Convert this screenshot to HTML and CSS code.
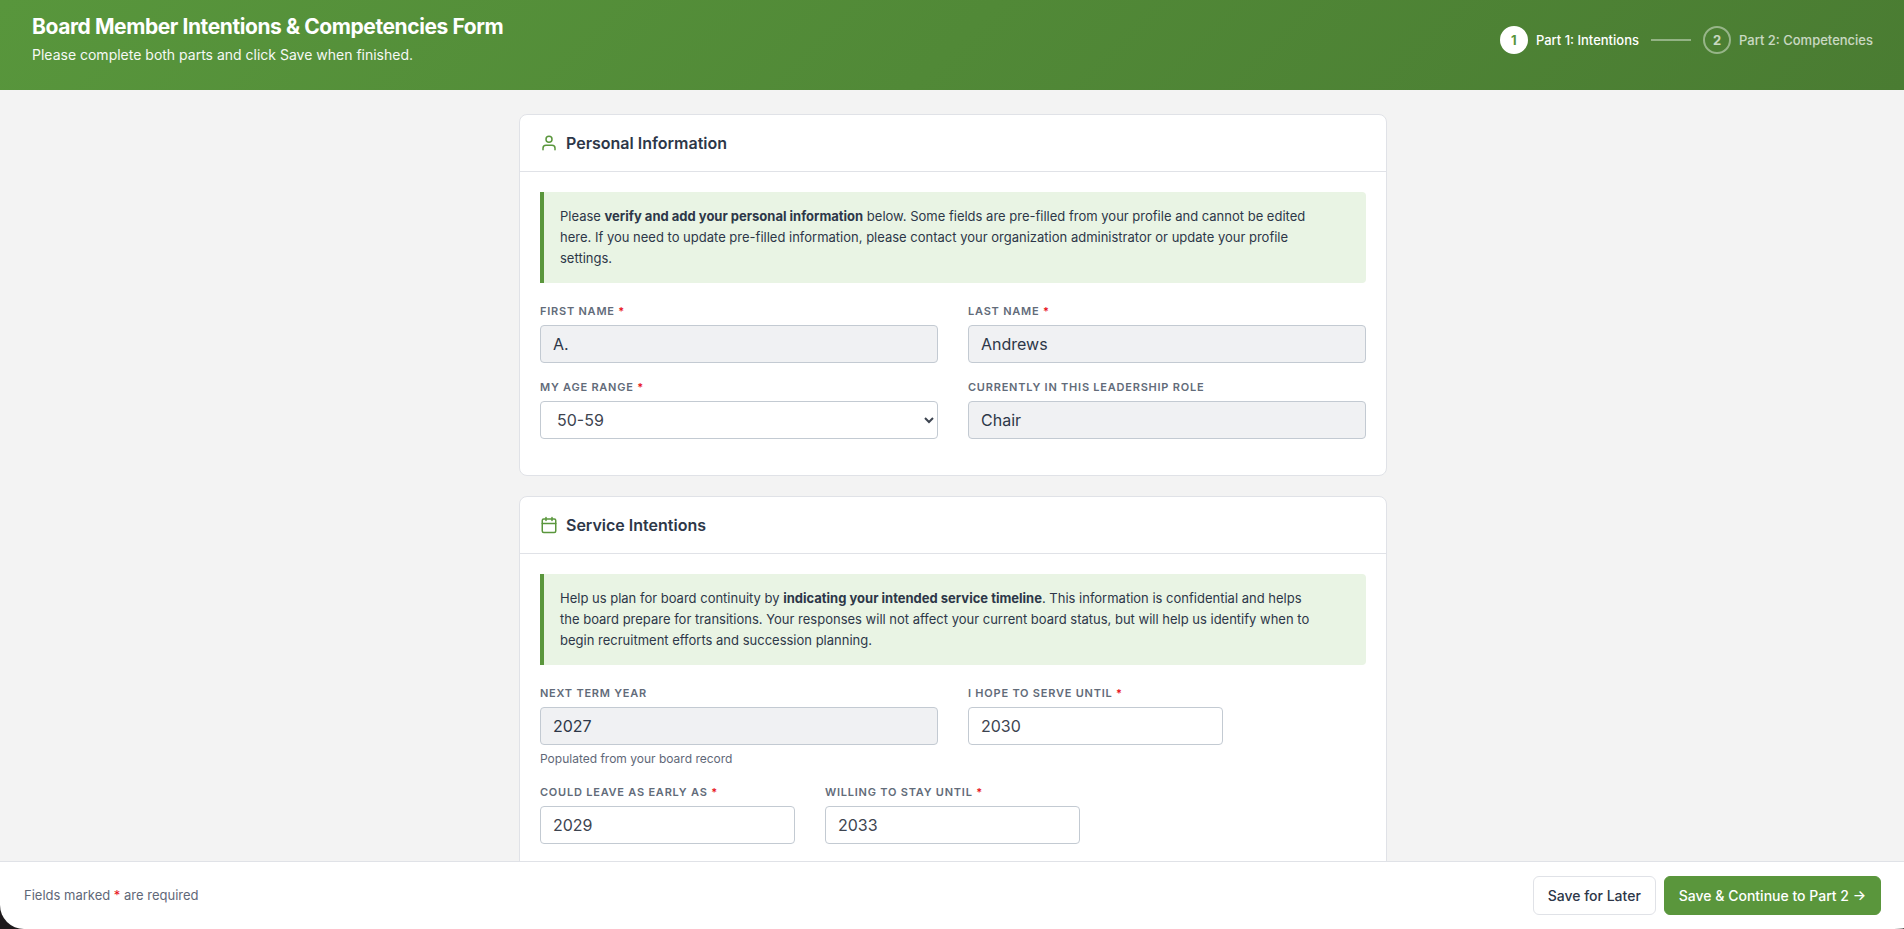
FILE: index.html
```html
<!DOCTYPE html>
<html lang="en">
<head>
    <meta charset="UTF-8">
    <meta name="viewport" content="width=device-width, initial-scale=1.0">
    <title>Board Member Intentions &amp; Competencies Form</title>
    <link rel="stylesheet" href="styles.css">
</head>
<body>
    <form class="page">
        <header class="page-header">
            <div class="header-text">
                <h1>Board Member Intentions &amp; Competencies Form</h1>
                <p>Please complete both parts and click Save when finished.</p>
            </div>
            <div class="steps">
                <div class="step active">
                    <span class="step-number">1</span>
                    <span>Part 1: Intentions</span>
                </div>
                <div class="step-line"></div>
                <div class="step">
                    <span class="step-number">2</span>
                    <span>Part 2: Competencies</span>
                </div>
            </div>
        </header>

        <main class="content">
            <section class="card">
                <div class="card-header">
                    <svg class="icon" viewBox="0 0 24 24"><path d="M20 21v-2a4 4 0 0 0-4-4H8a4 4 0 0 0-4 4v2"/><circle cx="12" cy="7" r="4"/></svg>
                    <h2>Personal Information</h2>
                </div>
                <div class="card-body">
                    <p class="notice">
                        Please <strong>verify and add your personal information</strong> below. Some fields are pre-filled from your profile and cannot be edited<br>
                        here. If you need to update pre-filled information, please contact your organization administrator or update your profile<br>
                        settings.
                    </p>
                    <div class="row">
                        <div class="field">
                            <label for="firstName">First Name <span class="required">*</span></label>
                            <input type="text" id="firstName" value="A." readonly>
                        </div>
                        <div class="field">
                            <label for="lastName">Last Name <span class="required">*</span></label>
                            <input type="text" id="lastName" value="Andrews" readonly>
                        </div>
                    </div>
                    <div class="row">
                        <div class="field">
                            <label for="ageRange">My Age Range <span class="required">*</span></label>
                            <select id="ageRange">
                                <option>50-59</option>
                            </select>
                        </div>
                        <div class="field">
                            <label for="role">Currently in this Leadership Role</label>
                            <input type="text" id="role" value="Chair" readonly>
                        </div>
                    </div>
                </div>
            </section>

            <section class="card">
                <div class="card-header">
                    <svg class="icon" viewBox="0 0 24 24"><rect x="3" y="4" width="18" height="18" rx="2"/><path d="M16 2v4M8 2v4M3 10h18"/></svg>
                    <h2>Service Intentions</h2>
                </div>
                <div class="card-body">
                    <p class="notice">
                        Help us plan for board continuity by <strong>indicating your intended service timeline</strong>. This information is confidential and helps<br>
                        the board prepare for transitions. Your responses will not affect your current board status, but will help us identify when to<br>
                        begin recruitment efforts and succession planning.
                    </p>
                    <div class="row">
                        <div class="field">
                            <label for="nextTerm">Next Term Year</label>
                            <input type="text" id="nextTerm" value="2027" readonly>
                            <small>Populated from your board record</small>
                        </div>
                        <div class="field">
                            <label for="serveUntil">I Hope to Serve Until <span class="required">*</span></label>
                            <input type="text" id="serveUntil" class="year" value="2030">
                        </div>
                    </div>
                    <div class="row compact">
                        <div class="field">
                            <label for="leaveEarly">Could Leave as Early as <span class="required">*</span></label>
                            <input type="text" id="leaveEarly" class="year" value="2029">
                        </div>
                        <div class="field">
                            <label for="stayUntil">Willing to Stay Until <span class="required">*</span></label>
                            <input type="text" id="stayUntil" class="year" value="2033">
                        </div>
                    </div>
                </div>
            </section>
        </main>

        <footer class="action-bar">
            <p>Fields marked <span class="required">*</span> are required</p>
            <div class="actions">
                <button type="button" class="btn">Save for Later</button>
                <button type="button" class="btn btn-primary">Save &amp; Continue to Part 2 →</button>
            </div>
        </footer>
    </form>
</body>
</html>
```
FILE: styles.css
```css
* {
    box-sizing: border-box;
}
body {
    margin: 0;
    font-family: Inter, "Liberation Sans", sans-serif;
    font-size: 14px;
    line-height: 21px;
    color: #2d3748;
    background-color: #1e1a1c;
}
h1, h2, p {
    margin: 0;
}
.page {
    display: flex;
    flex-direction: column;
    height: 100vh;
}
.page-header {
    display: flex;
    justify-content: space-between;
    align-items: center;
    padding: 10px 31px 20px 32px;
    background: linear-gradient(135deg, #58963c, #4a7c32);
    color: white;
}
.header-text {
    padding-bottom: 5px;
}
h1 {
    font-size: 21px;
    line-height: 33px;
    font-weight: 700;
    letter-spacing: -0.02em;
}
.header-text p {
    margin-top: 1px;
    opacity: 0.95;
}
.steps {
    display: flex;
    align-items: center;
    gap: 12px;
}
.step {
    display: flex;
    align-items: center;
    gap: 8px;
    font-size: 13px;
    font-weight: 500;
    opacity: 0.7;
}
.step.active {
    opacity: 1;
}
.step-number {
    display: flex;
    align-items: center;
    justify-content: center;
    width: 28px;
    height: 28px;
    border: 2px solid rgba(255,255,255,0.6);
    border-radius: 50%;
    font-weight: 700;
}
.step.active .step-number {
    background-color: white;
    border-color: white;
    color: #5a963c;
}
.step-line {
    width: 40px;
    height: 2px;
    background-color: rgba(255,255,255,0.4);
}
.content {
    flex: 1;
    display: flex;
    flex-direction: column;
    align-items: center;
    gap: 20px;
    padding: 24px 24px 24px 26px;
    overflow-y: auto;
    scrollbar-width: none;
    background-color: #f3f3f3;
}
.card {
    flex-shrink: 0;
    width: 100%;
    max-width: 868px;
    background-color: white;
    border: 1px solid #e0e2e7;
    border-radius: 8px;
}
.card-header {
    display: flex;
    align-items: center;
    gap: 8px;
    padding: 16px 20px;
    border-bottom: 1px solid #e0e2e7;
}
.icon {
    width: 18px;
    height: 18px;
    fill: none;
    stroke: #5a963c;
    stroke-width: 2;
    stroke-linecap: round;
    stroke-linejoin: round;
}
h2 {
    font-size: 16px;
    line-height: 24px;
    font-weight: 600;
}
.card-body {
    padding: 20px;
}
.notice {
    margin-bottom: 20px;
    padding: 14px 16px;
    border-left: 4px solid #5a963c;
    border-radius: 0 4px 4px 0;
    background-color: #e9f4e4;
    font-size: 13px;
}
.row {
    display: grid;
    grid-template-columns: 1fr 1fr;
    gap: 30px;
    margin-bottom: 16px;
}
.row.compact {
    display: flex;
}
.field {
    display: flex;
    flex-direction: column;
}
label {
    margin-bottom: 6px;
    font-size: 11px;
    line-height: 16px;
    font-weight: 600;
    letter-spacing: 0.07em;
    text-transform: uppercase;
    color: #626b79;
}
.required {
    color: #e8141c;
}
input, select {
    width: 100%;
    height: 38px;
    padding: 0 12px;
    border: 1px solid #c3cad2;
    border-radius: 4px;
    background-color: white;
    font-family: inherit;
    font-size: 16px;
    color: #3d4450;
}
input[readonly] {
    background-color: #f0f1f3;
    color: #2d3748;
}
input.year {
    width: 255px;
}
small {
    margin-top: 5px;
    font-size: 12px;
    line-height: 18px;
    color: #5f6878;
}
.action-bar {
    display: flex;
    justify-content: space-between;
    align-items: center;
    padding: 14px 23px 14px 24px;
    border-top: 1px solid #e0e2e7;
    border-radius: 0 0 16px 24px / 0 0 1px 24px;
    background-color: white;
}
.action-bar p {
    font-size: 13px;
    color: #5f6878;
}
.actions {
    display: flex;
    gap: 8px;
}
.btn {
    padding: 8px 14px;
    border: 1px solid #e0e2e7;
    border-radius: 6px;
    background-color: white;
    font-family: inherit;
    font-size: 14px;
    line-height: 21px;
    font-weight: 500;
    color: #2d3748;
    cursor: pointer;
}
.btn-primary {
    border-color: #5a963c;
    background-color: #5a963c;
    color: white;
}
```
